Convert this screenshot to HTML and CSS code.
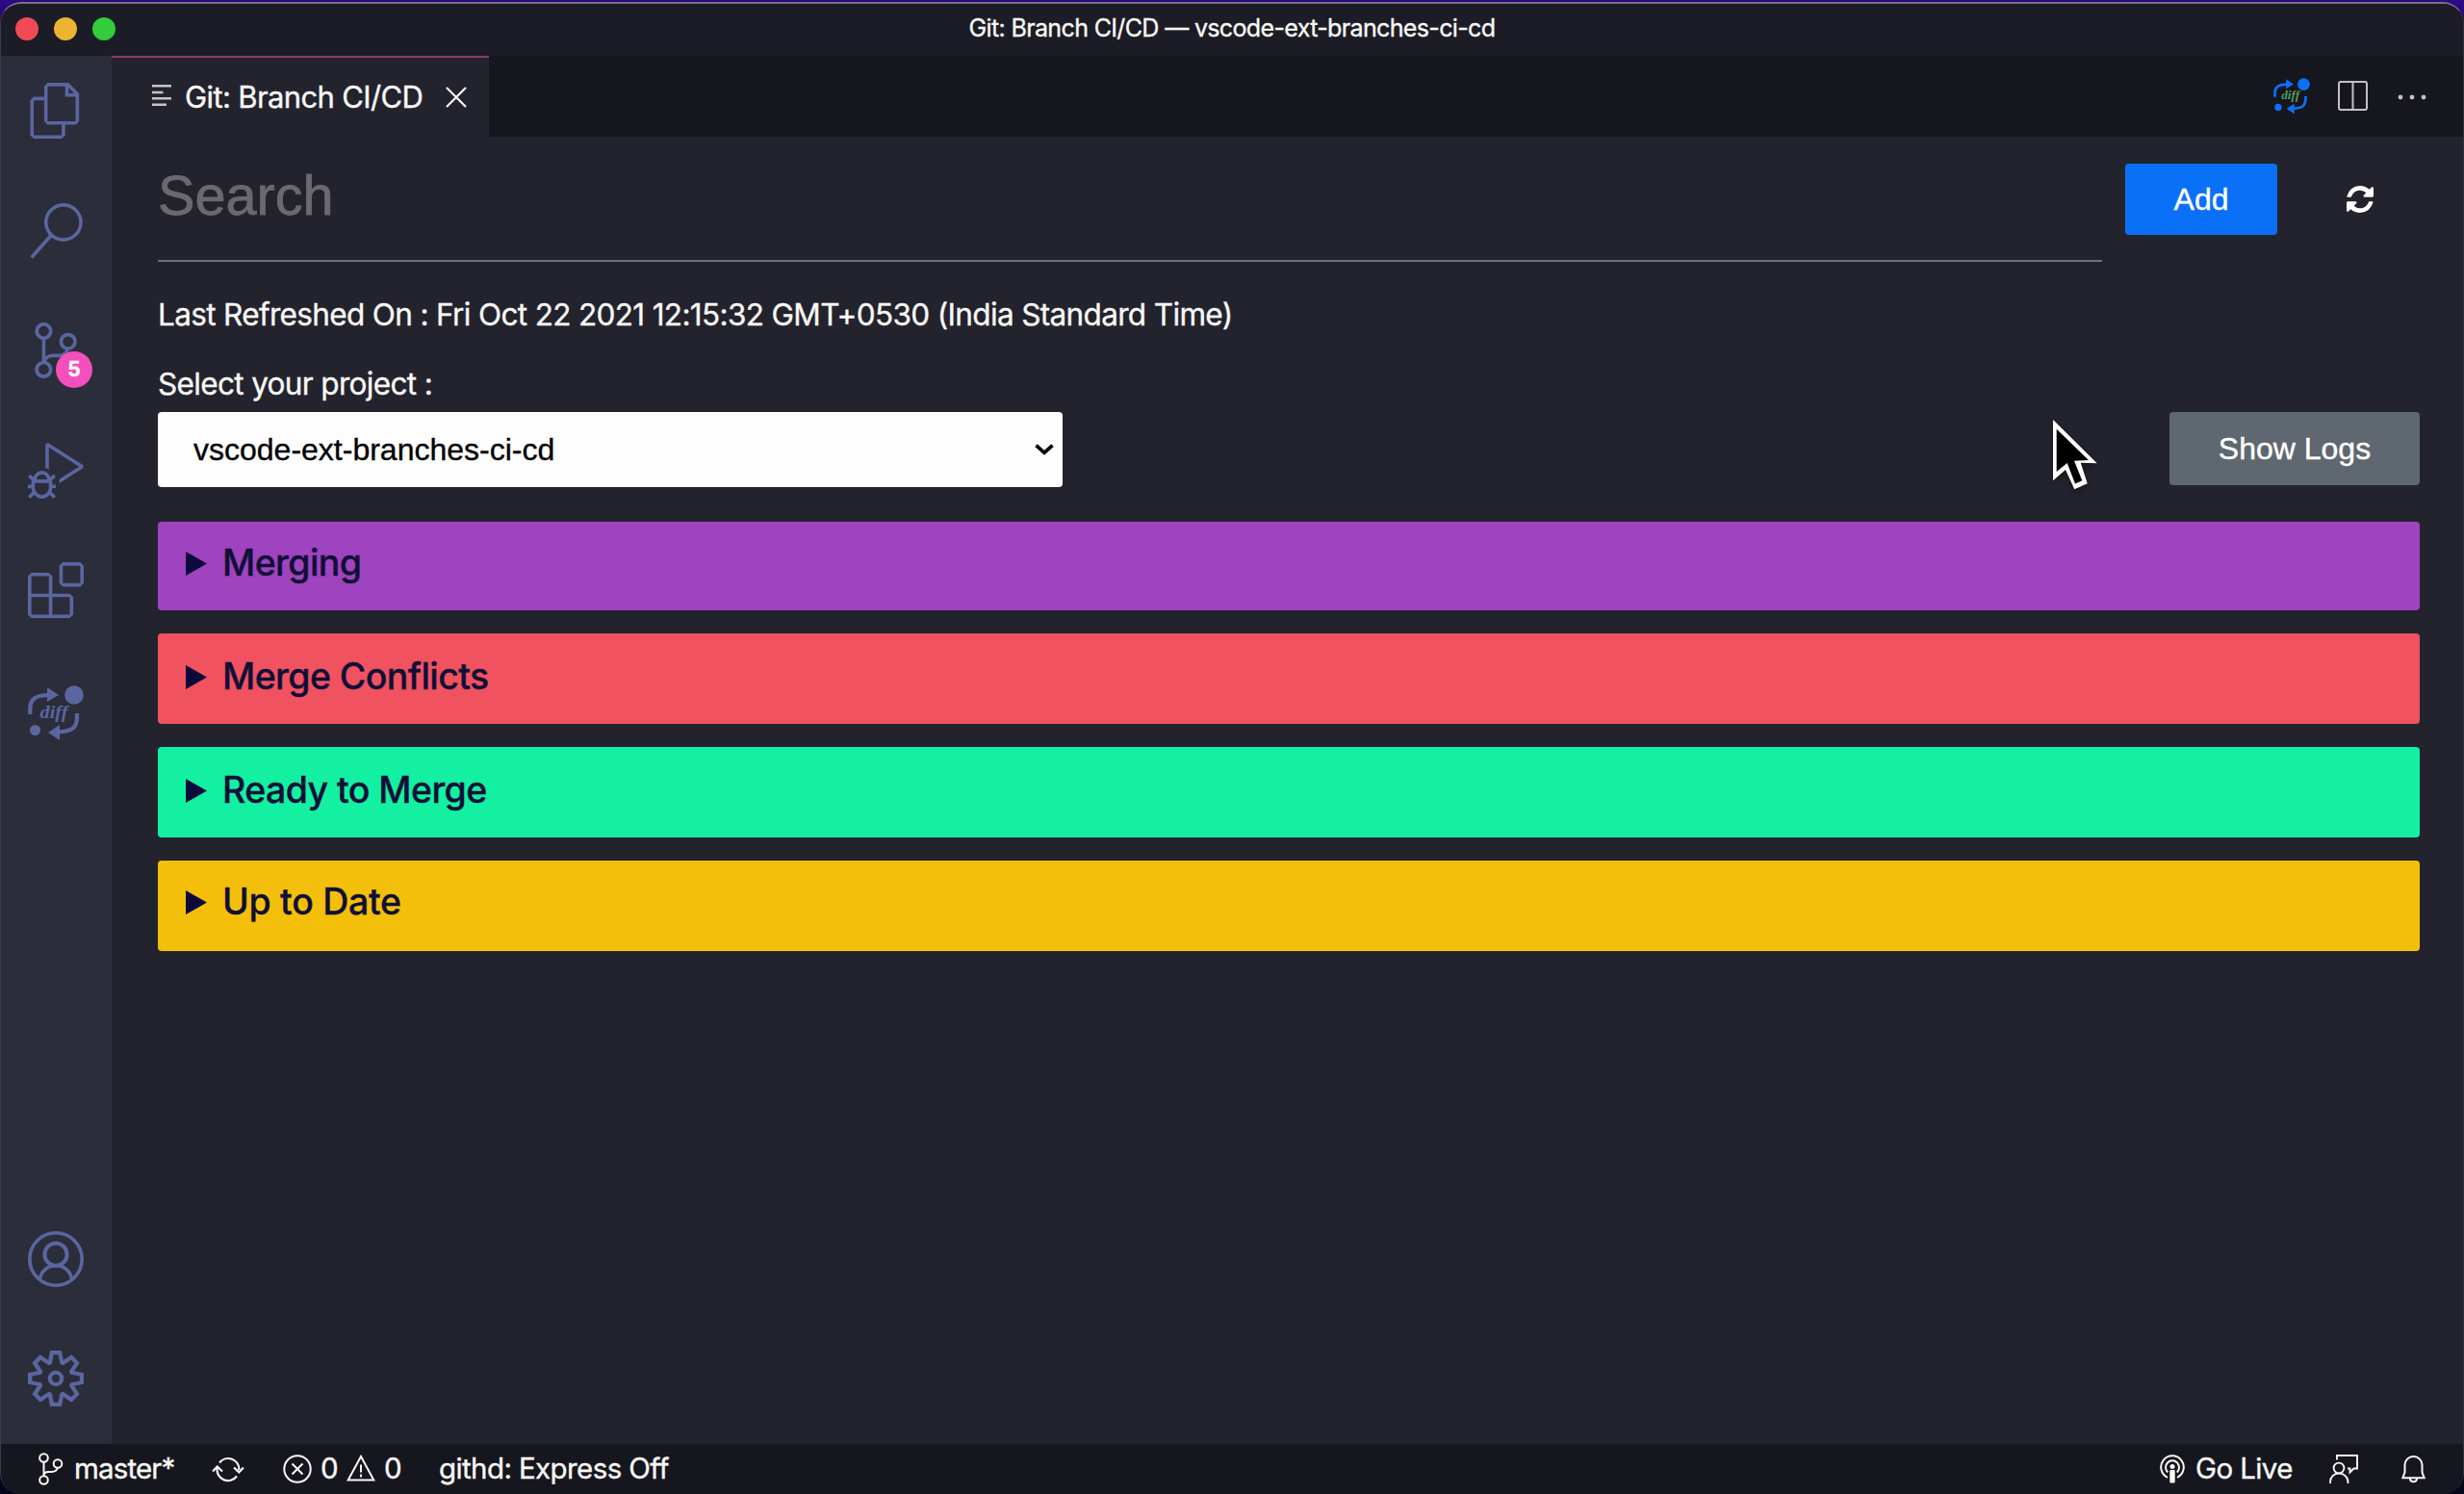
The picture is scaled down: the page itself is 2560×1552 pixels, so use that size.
FILE: index.html
```
<!DOCTYPE html>
<html lang="en">
<head>
<meta charset="utf-8">
<title>Git: Branch CI/CD — vscode-ext-branches-ci-cd</title>
<link rel="stylesheet" href="styles.css">
</head>
<body>
<div class="window">
  <header class="titlebar">
    <div class="lights"><i class="red"></i><i class="yellow"></i><i class="green"></i></div>
    <div class="title">Git: Branch CI/CD — vscode-ext-branches-ci-cd</div>
  </header>
  <div class="workbench">
    <nav class="activity">
      <div class="act"><svg viewBox="0 0 24 24"><path d="M17.500 0h-9L7 1.500V6H2.500L1 7.500v15.070L2.500 24h12.070L16 22.570V18h4.700l1.300-1.430V4.500L17.500 0zm0 2.120l2.380 2.380H17.500V2.120zm-3 20.380h-12v-15H7v9.070L8.500 18h6v4.500zm6-6h-12v-15H16V6h4.500v10.500z"/></svg></div>
      <div class="act"><svg viewBox="0 0 24 24"><path d="M15.250 0a8.250 8.250 0 0 0-6.180 13.720L1 22.880l1.120 1 8.050-9.120A8.251 8.251 0 1 0 15.250.01V0zm0 15a6.750 6.750 0 1 1 0-13.500 6.750 6.750 0 0 1 0 13.500z"/></svg></div>
      <div class="act"><svg viewBox="0 0 24 24"><path d="M21.007 8.222A3.738 3.738 0 0 0 15.045 5.200a3.737 3.737 0 0 0 1.156 6.583 2.988 2.988 0 0 1-2.668 1.670h-2.990a4.456 4.456 0 0 0-2.989 1.165V7.400a3.737 3.737 0 1 0-1.494 0v9.117a3.776 3.776 0 1 0 1.816.099 2.990 2.990 0 0 1 2.668-1.667h2.990a4.484 4.484 0 0 0 4.223-3.039 3.736 3.736 0 0 0 3.250-3.687zM4.565 3.738a2.242 2.242 0 1 1 4.484 0 2.242 2.242 0 0 1-4.484 0zm4.484 16.441a2.242 2.242 0 1 1-4.484 0 2.242 2.242 0 0 1 4.484 0zm8.221-9.715a2.242 2.242 0 1 1 0-4.485 2.242 2.242 0 0 1 0 4.485z"/></svg><span class="badge">5</span></div>
      <div class="act"><svg viewBox="0 0 24 24"><path d="M10.940 13.500l-1.320 1.320a3.730 3.730 0 0 0-7.240 0L1.060 13.500 0 14.560l1.720 1.720-.22.22V18H0v1.500h1.500v.08c.077.489.214.966.41 1.420L0 22.940 1.060 24l1.650-1.650A4.308 4.308 0 0 0 6 24a4.310 4.310 0 0 0 3.290-1.650L10.940 24 12 22.940 10.090 21c.198-.464.336-.951.41-1.450v-.1H12V18h-1.500v-1.500l-.22-.22L12 14.560l-1.060-1.060zM6 13.500a2.250 2.250 0 0 1 2.250 2.250h-4.500A2.250 2.250 0 0 1 6 13.500zm3 6a3.330 3.330 0 0 1-3 3 3.330 3.330 0 0 1-3-3v-2.250h6v2.250zm14.760-9.900v1.260L13.500 17.370V15.600l8.500-5.370L9 2v9.460a5.070 5.070 0 0 0-1.500-.72V.63L8.640 0l15.120 9.600z"/></svg></div>
      <div class="act"><svg viewBox="0 0 24 24"><path d="M13.500 1.500L15 0h7.500L24 1.500V9l-1.500 1.500H15L13.500 9V1.500zm1.500 0V9h7.500V1.500H15zM0 15V6l1.500-1.500H9L10.500 6v7.500H18l1.500 1.500v7.500L18 24H1.500L0 22.500V15zm9-1.500V6H1.500v7.500H9zM9 15H1.500v7.500H9V15zm1.500 7.500H18V15h-7.500v7.500z"/></svg></div>
      <div class="act act-diff"><svg viewBox="0 0 58 58">
        <path d="M2.300 30V24C2.300 14 9 10 22 10M51 29v4C51 44 46 48 31 48.500" fill="none" stroke="currentColor" stroke-width="4.200"/>
        <path d="M20 2l12 8-12 7zM33 41l-12 8 12 8z"/>
        <circle cx="48" cy="10" r="9.800"/><circle cx="7.500" cy="46.500" r="5.500"/>
        <text class="diff-label" x="27" y="34" text-anchor="middle" textLength="29" lengthAdjust="spacingAndGlyphs">diff</text>
      </svg></div>
      <div class="act account"><svg viewBox="0 0 24 24"><circle cx="12" cy="12" r="11.250" stroke-width="1.500"/><circle cx="12" cy="10" r="4.800" stroke-width="1.650"/><path d="M5.100 20.700C5.700 17 8.500 14.800 12 14.800s6.300 2.200 6.900 5.900" stroke-width="1.500"/></svg></div>
      <div class="act"><svg viewBox="0 0 24 24"><path d="M19.850 8.750l4.150.83v4.840l-4.150.83 2.350 3.520-3.430 3.430-3.520-2.350-.83 4.150H9.580l-.83-4.150-3.520 2.350-3.430-3.430 2.350-3.520L0 14.420V9.580l4.150-.83L1.800 5.230 5.230 1.800l3.520 2.350L9.580 0h4.840l.83 4.150 3.520-2.350 3.430 3.430-2.350 3.520zm-1.570 5.070l4-.81v-2l-4-.81-.54-1.300 2.290-3.430-1.430-1.430-3.430 2.290-1.300-.54-.81-4h-2l-.81 4-1.300.54-3.430-2.290-1.430 1.430L6.380 8.900l-.54 1.300-4 .81v2l4 .81.54 1.300-2.290 3.430 1.430 1.430 3.430-2.290 1.300.54.81 4h2l.81-4 1.300-.54 3.430 2.290 1.430-1.430-2.290-3.430.54-1.300zM12 8.570a3.430 3.430 0 1 1 0 6.860 3.430 3.430 0 0 1 0-6.860zm0 1.720a1.710 1.710 0 1 0 0 3.420 1.710 1.710 0 0 0 0-3.420z" fill-rule="evenodd"/></svg></div>
    </nav>
    <main class="editor">
      <div class="tabs">
        <div class="tab">
          <svg class="lines" viewBox="0 0 20 22"><path d="M0 1.300h20M0 8h11.500M0 14.300h20M0 20.700h15" stroke="currentColor" stroke-width="2.500"/></svg>
          <span class="tab-name">Git: Branch CI/CD</span>
          <svg class="close" viewBox="0 0 22 22"><path d="M1 1l20 20M21 1L1 21" stroke="currentColor" stroke-width="2.200"/></svg>
        </div>
        <div class="actions">
          <svg class="diff-action" viewBox="0 0 58 58" fill="currentColor">
            <path d="M2.300 30V24C2.300 14 9 10 22 10M51 29v4C51 44 46 48 31 48.500" fill="none" stroke="currentColor" stroke-width="4.200"/>
            <path d="M20 2l12 8-12 7zM33 41l-12 8 12 8z"/>
            <circle cx="48" cy="10" r="9.800"/><circle cx="7.500" cy="46.500" r="5.500"/>
            <text class="diff-label" x="27" y="34" text-anchor="middle" textLength="29" lengthAdjust="spacingAndGlyphs">diff</text>
          </svg>
          <svg class="split" viewBox="0 0 31 31"><rect x="1" y="1" width="29" height="29" rx="2" fill="none" stroke="currentColor" stroke-width="2"/><path d="M15.500 1v29" stroke="currentColor" stroke-width="2"/></svg>
          <svg class="more" viewBox="0 0 30 6" fill="currentColor"><circle cx="3" cy="3" r="2.400"/><circle cx="15" cy="3" r="2.400"/><circle cx="27" cy="3" r="2.400"/></svg>
        </div>
      </div>
      <div class="content">
        <div class="search-row">
          <input class="search" type="text" placeholder="Search">
          <button class="btn add">Add</button>
          <svg class="refresh" viewBox="0 0 1536 1536"><path fill="currentColor" d="M1511 928q0 5-1 7-64 268-268 434.500t-478 166.500q-146 0-282.500-55t-243.500-157l-129 129q-19 19-45 19t-45-19-19-45v-448q0-26 19-45t45-19h448q26 0 45 19t19 45-19 45l-137 137q71 66 161 102t187 36q134 0 250-65t186-179q11-17 53-117 8-23 30-23h192q13 0 22.500 9.500t9.500 22.500zm25-800v448q0 26-19 45t-45 19h-448q-26 0-45-19t-19-45 19-45l138-138q-148-137-349-137-134 0-250 65t-186 179q-11 17-53 117-8 23-30 23h-199q-13 0-22.500-9.500t-9.500-22.500v-7q65-268 270-434.500t480-166.500q146 0 284 55.500t245 156.500l130-129q19-19 45-19t45 19 19 45z"/></svg>
        </div>
        <p class="stamp">Last Refreshed On : Fri Oct 22 2021 12:15:32 GMT+0530 (India Standard Time)</p>
        <label class="label" for="project">Select your project :</label>
        <div class="project-row">
          <div class="select-wrap">
            <select id="project"><option>vscode-ext-branches-ci-cd</option></select>
            <svg class="chevron" viewBox="0 0 20 12"><path d="M1.500 1.700L10 9.300l8.500-7.600" fill="none" stroke="#000" stroke-width="3.800"/></svg>
          </div>
          <button class="btn logs">Show Logs</button>
        </div>
        <section class="group merging"><svg class="tri" viewBox="0 0 22 25"><path d="M0 0l22 12.500L0 25z"/></svg><h2>Merging</h2></section>
        <section class="group conflicts"><svg class="tri" viewBox="0 0 22 25"><path d="M0 0l22 12.500L0 25z"/></svg><h2>Merge Conflicts</h2></section>
        <section class="group ready"><svg class="tri" viewBox="0 0 22 25"><path d="M0 0l22 12.500L0 25z"/></svg><h2>Ready to Merge</h2></section>
        <section class="group uptodate"><svg class="tri" viewBox="0 0 22 25"><path d="M0 0l22 12.500L0 25z"/></svg><h2>Up to Date</h2></section>
      </div>
    </main>
  </div>
  <footer class="status">
    <svg class="branch" viewBox="0 0 26 34" fill="none" stroke="currentColor" stroke-width="2"><circle cx="5.500" cy="5.500" r="4.300"/><circle cx="20" cy="11.500" r="4.300"/><circle cx="5.500" cy="28.500" r="4.300"/><path d="M5.500 10v14.200M5.500 24c0-3 2-4 5-4h3c3.500 0 5.600-1.500 6.500-4.200"/></svg>
    <span class="s-branch">master*</span>
    <svg class="sync" viewBox="0 0 34 27" fill="none" stroke="currentColor" stroke-width="2.200"><path d="M8 6.500A11.300 11.300 0 0 1 28.300 14M26 20.500A11.300 11.300 0 0 1 5.700 12"/><path d="M23 11.500l5.300 5 4.700-5M1 15.500l4.700-5 5.300 5"/></svg>
    <svg class="err" viewBox="0 0 30 30" fill="none" stroke="currentColor" stroke-width="2"><circle cx="15" cy="15" r="13.700"/><path d="M9.500 9.500l11 11M20.500 9.500l-11 11"/></svg>
    <span class="s-err">0</span>
    <svg class="warn" viewBox="0 0 30 28" fill="none" stroke="currentColor" stroke-width="2"><path d="M15 2L28.300 26.500H1.700zM15 10.500v8M15 20.500v3"/></svg>
    <span class="s-warn">0</span>
    <span class="s-githd">githd: Express Off</span>
    <svg class="cast" viewBox="0 0 26 30" fill="none" stroke="currentColor" stroke-width="2"><path d="M8 23.800A11.800 11.800 0 1 1 18 23.800M8.300 18.500a7 7 0 1 1 9.400 0"/><circle cx="13" cy="12.500" r="2.500" fill="currentColor" stroke="none"/><rect x="10.300" y="16" width="5.400" height="13.500" rx="1" fill="currentColor" stroke="none"/></svg>
    <span class="s-live">Go Live</span>
    <svg class="feedback" viewBox="0 0 30 30" fill="none" stroke="currentColor" stroke-width="1.900"><circle cx="10" cy="14" r="5.400"/><path d="M1 30v-1.500c0-5 4-9 9-9s9.500 4 9.500 9V30M8 5.500V1h21v13.500h-3.500L21.500 18.500v-4H19"/></svg>
    <svg class="bell" viewBox="0 0 25 30" fill="none" stroke="currentColor" stroke-width="2"><path d="M3.500 18.500V11a9 9 0 0 1 18 0v7.500l2.200 5.800H1.300zM9 24.500c0 5 7 5 7 0"/></svg>
  </footer>
  <svg class="cursor" viewBox="0 0 46 73"><path d="M0 0l45.700 45.300-17 -.5 7 21.500-13.400 6L13 52 0 63.300z" fill="#fff"/><path d="M3.700 9.700L37 42l-15 .700 8.300 20.600-7.300 3.300L14.700 45 3.700 54z" fill="#000"/></svg>
</div>
</body>
</html>
```
FILE: styles.css
```
* { box-sizing: border-box; }
html, body { margin: 0; height: 100%; }
body {
  width: 2560px; height: 1552px; overflow: hidden; padding-top: 2px;
  background: linear-gradient(#2c0a86 0, #250a6c 30px, #0b0a1c 80px, #07061a 100%);
  font-family: Inter, sans-serif; color: #f8f8f5;
  -webkit-text-stroke: .35px currentColor;
}
svg { display: block; flex: none; }
.window {
  position: relative; height: 1550px; display: flex; flex-direction: column;
  border-radius: 22px; overflow: hidden; background: #23232e;
  border-top: 2px solid #77747f; border-left: 1px solid #3b3c48; border-right: 1px solid #30303c;
}
.titlebar { position: relative; height: 54px; flex: none; background: #1c1c26; display: flex; align-items: center; }
.lights { display: flex; gap: 16px; padding: 0 0 2px 15px; }
.lights i { width: 24px; height: 24px; border-radius: 50%; }
.red { background: #f04a55; }
.yellow { background: #edb332; }
.green { background: #33cc3a; }
.title { position: absolute; inset: -3px 0 auto; text-align: center; font-size: 25px; letter-spacing: -.64px; line-height: 57px; }
.workbench { flex: 1; display: flex; min-height: 0; }
.activity { width: 115px; background: #2c2d3a; color: #5966a0; display: flex; flex-direction: column; }
.act { position: relative; height: 124.600px; flex: none; padding: 28px 0 0 28px; }
.act svg { width: 58px; height: 58px; fill: currentColor; }
.act-diff { padding-top: 31px; }
.account { margin-top: auto; }
.account svg { fill: none; stroke: currentColor; }
.badge {
  position: absolute; left: 57px; top: 58px; width: 38px; height: 38px; border-radius: 50%;
  background: #f44fbc; color: #fff; font-size: 21px; font-weight: 700; line-height: 38px; text-align: center;
}
.diff-label { font: italic bold 18px "Liberation Serif", serif; fill: currentColor; }
.editor { flex: 1; display: flex; flex-direction: column; }
.tabs { height: 84px; background: #16161e; display: flex; justify-content: space-between; }
.tab { width: 392px; background: #23232e; border-top: 2px solid #8f376d; display: flex; align-items: center; padding-left: 42px; }
.lines { width: 20px; height: 22px; color: #c5c5c9; margin: -4px 14px 0 0; }
.tab-name { width: 256px; font-size: 31px; letter-spacing: -.63px; line-height: 82px; white-space: nowrap; }
.close { width: 22px; height: 22px; margin: 0 0 1px 15px; }
.actions { display: flex; align-items: center; padding-right: 38px; color: #c2c2c6; }
.diff-action { width: 38px; height: 38px; margin-right: 29px; color: #0b70f8; }
.diff-action .diff-label { fill: #4f9b5c; }
.split { width: 31px; height: 31px; margin: 0 31px 1px 0; }
.more { width: 30px; height: 6px; margin-top: 2px; }
.content { padding: 21px 45px 0 48px; display: flex; flex-direction: column; }
.search-row { display: flex; height: 109px; align-items: flex-start; }
.search {
  width: 2020px; height: 109px; padding: 0 0 27px; border: 0; border-bottom: 2px solid #70707a; background: none; outline: 0;
  font: 57.600px "Liberation Sans", sans-serif; color: #f8f8f5;
}
.search::placeholder { color: #69696e; opacity: 1; -webkit-text-stroke: .8px #69696e; }
.btn { border: 0; border-radius: 4px; padding: 0; color: #fff; font: 32px "Liberation Sans", sans-serif; -webkit-text-stroke: .35px #fff; }
.add { width: 158px; height: 74px; line-height: 74px; margin: 7px 72px 0 24px; background: #0b70f8; }
.refresh { width: 28px; height: 28px; margin-top: 30px; color: #fff; }
.stamp, .label { margin: 0; font-size: 31.500px; letter-spacing: -.65px; white-space: nowrap; }
.stamp { line-height: 54px; margin-top: 28px; }
.label { line-height: 54px; margin-top: 18px; }
.project-row { display: flex; justify-content: space-between; margin-top: 2px; }
.select-wrap { position: relative; width: 940px; }
.select-wrap select {
  display: block; width: 100%; height: 78px; padding: 0 37px; border: 0; border-radius: 4px; appearance: none;
  background: #fdfdfe; color: #000; font: 32px "Liberation Sans", sans-serif; -webkit-text-stroke: .35px #000;
}
.chevron { position: absolute; right: 9px; top: 33px; width: 20px; height: 12px; }
.logs { width: 260px; height: 76px; padding-top: 1px; background: #5f6870; }
.group { height: 94px; margin-top: 24px; border-radius: 4px; display: flex; align-items: flex-start; padding-left: 29px; color: #100f38; }
.group h2 { margin: 0; font-size: 37.500px; font-weight: 500; letter-spacing: -.58px; line-height: 85px; }
.tri { width: 22px; height: 25px; margin: 31px 16px 0 0; fill: #0c0a3c; }
.merging { height: 92px; margin-top: 36px; background: #9f43be; }
.conflicts { background: #f0525f; }
.ready { background: #13f0a1; }
.uptodate { background: #f3bf0a; }
.conflicts h2, .ready h2 { line-height: 90px; }
.uptodate h2 { letter-spacing: -.3px; }
.conflicts .tri, .ready .tri { margin-top: 33px; }
.status { height: 52px; flex: none; background: #16161e; display: flex; align-items: center; padding: 0 39px; font-size: 29.500px; letter-spacing: -.6px; white-space: nowrap; }
.status span { margin-bottom: 2px; }
.branch { width: 26px; height: 34px; }
.s-branch { width: 142px; padding-left: 11px; letter-spacing: -.85px; }
.sync { width: 34px; height: 27px; margin-left: 12px; }
.err { width: 30px; height: 30px; margin-left: 40px; }
.s-err { width: 27px; margin-left: 9px; }
.warn { width: 30px; height: 28px; margin-bottom: 3px; }
.s-warn { width: 57px; margin-left: 9px; }
.s-githd { flex: 1; }
.cast { width: 26px; height: 30px; }
.s-live { width: 139px; margin-left: 11px; }
.feedback { width: 30px; height: 30px; margin: 0 45px 0 0; }
.bell { width: 25px; height: 30px; }
.cursor { position: absolute; left: 2132px; top: 432px; width: 46px; height: 73px; filter: drop-shadow(0 3px 3px rgba(0, 0, 0, .35)); }
```
